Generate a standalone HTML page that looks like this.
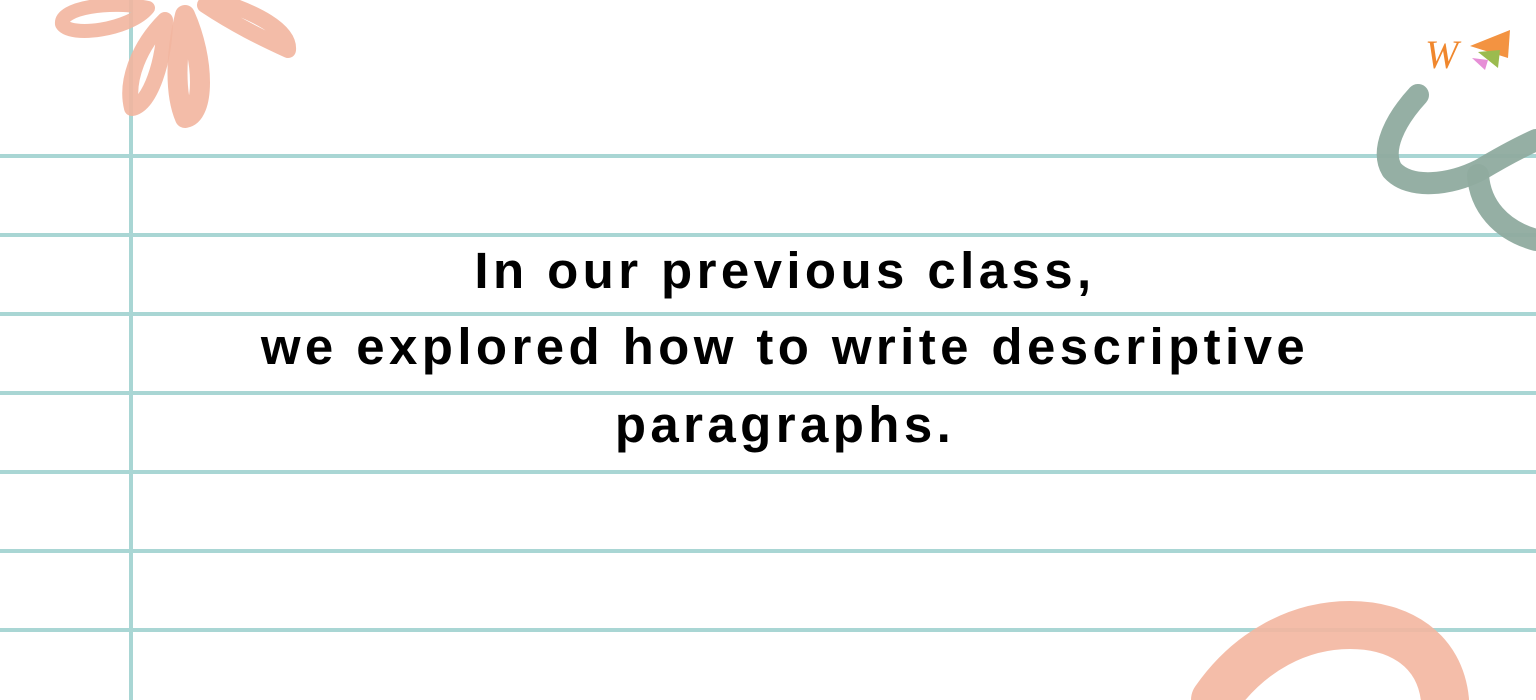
<!DOCTYPE html>
<html><head><style>
html,body{margin:0;padding:0;background:#fff;}
body{width:1536px;height:700px;position:relative;overflow:hidden;}
.h{position:absolute;left:0;width:1536px;height:4px;background:#a9d6d4;}
.v{position:absolute;left:129px;top:0;width:4px;height:700px;background:#a9d6d4;}
svg{position:absolute;left:0;top:0;}
.t{position:absolute;left:0;width:1570px;text-align:center;font-family:"Liberation Sans",sans-serif;font-weight:bold;font-size:51px;letter-spacing:4.4px;color:#000;}
</style></head><body>
<div class="h" style="top:154px"></div>
<div class="h" style="top:233px"></div>
<div class="h" style="top:312px"></div>
<div class="h" style="top:391px"></div>
<div class="h" style="top:470px"></div>
<div class="h" style="top:549px"></div>
<div class="h" style="top:628px"></div>
<div class="v"></div>
<svg width="1536" height="700" viewBox="0 0 1536 700">
<g fill="none" stroke="#f2b59f" stroke-opacity="0.9" stroke-linecap="round" stroke-linejoin="round">
<path d="M148 8 C110 0 60 8 62 24 C70 38 130 30 148 8 Z" stroke-width="14"/>
<path d="M165 20 C140 45 125 80 132 108 C150 105 165 60 165 20 Z" stroke-width="16"/>
<path d="M185 15 C175 55 175 95 185 118 C205 115 205 60 185 15 Z" stroke-width="20"/>
<path d="M205 5 C235 25 262 38 288 50 C290 30 255 12 215 0" stroke-width="16"/>
<path d="M1215 700 C1250 650 1300 625 1350 625 C1400 625 1440 650 1445 700" stroke-width="48" stroke="#f3b6a0"/>
</g>
<g fill="none" stroke="#8fab9f" stroke-opacity="0.95" stroke-linecap="round" stroke-linejoin="round" stroke-width="22">
<path d="M1418 95 C1395 120 1380 150 1392 170 C1410 190 1450 185 1480 170 C1505 155 1525 145 1536 140"/>
<path d="M1478 175 C1480 205 1500 230 1536 240"/>
</g>
<text x="1425" y="68" font-family="Liberation Serif,serif" font-style="italic" font-size="40" fill="#f0872d">W</text>
<polygon points="1470,46 1510,30 1508,58" fill="#f39341"/>
<polygon points="1478,52 1500,50 1498,68" fill="#9bbb4f"/>
<polygon points="1472,58 1488,60 1485,70" fill="#e68fd6"/>
</svg>
<div class="t" style="top:241px">In our previous class,</div>
<div class="t" style="top:317px">we explored how to write descriptive</div>
<div class="t" style="top:395px">paragraphs.</div>
</body></html>
